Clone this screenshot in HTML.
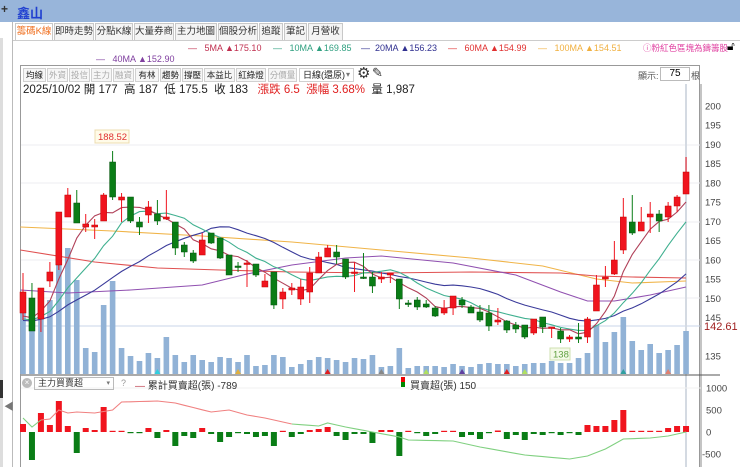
<!DOCTYPE html>
<html><head><meta charset="utf-8">
<style>
*{margin:0;padding:0;box-sizing:border-box}
body{width:740px;height:467px;overflow:hidden;background:#fff;font-family:"Liberation Sans","Noto Sans CJK TC",sans-serif;position:relative}
.abs{position:absolute;white-space:nowrap}
.tab{position:absolute;top:23px;height:18px;border:1px solid #c8c8c8;background:#f4f4f4;font-size:9.5px;line-height:16px;text-align:center;color:#333;white-space:nowrap;overflow:hidden}
.tb{position:absolute;top:68px;height:14px;border:1px solid #d0d0d0;background:#f6f6f6;font-size:8.5px;line-height:12px;text-align:center;color:#222;white-space:nowrap;overflow:hidden}
.tb.g{color:#aaa}
.lg{position:absolute;font-size:9px;white-space:nowrap}
</style></head><body>
<div class="abs" style="left:0;top:0;width:740px;height:22px;background:#98b5da"></div>
<div class="abs" style="left:1px;top:2px;font-size:12px;font-weight:bold;color:#333">+</div>
<div class="abs" style="left:17px;top:3px;font-size:13px;font-weight:bold;color:#1f3fd0">鑫山</div>
<div class="abs" style="left:12px;top:22px;width:1px;height:445px;background:#bbb"></div>
<div class="abs" style="left:0;top:38px;width:3px;height:429px;background:#ddd"></div>
<div class="abs" style="left:0;top:380px;width:3px;height:18px;background:#333"></div>
<div class="abs" style="left:4px;top:398px;font-size:10px;color:#777">◀</div>

<div class="tab" style="left:15px;width:38px;background:#fff;color:#f07020;border-bottom-color:#fff">籌碼K線</div>
<div class="tab" style="left:54px;width:40px">即時走勢</div>
<div class="tab" style="left:95px;width:38px">分點K線</div>
<div class="tab" style="left:134px;width:40px">大量券商</div>
<div class="tab" style="left:175px;width:42px">主力地圖</div>
<div class="tab" style="left:218px;width:40px">個股分析</div>
<div class="tab" style="left:259px;width:24px">追蹤</div>
<div class="tab" style="left:284px;width:23px">筆記</div>
<div class="tab" style="left:308px;width:35px">月營收</div>
<div class="abs" style="left:13px;top:40px;width:727px;height:1px;background:#ccc"></div>

<div class="lg" style="left:188px;top:43px;color:#c03050">—&nbsp;&nbsp;&nbsp;5MA ▲175.10</div>
<div class="lg" style="left:273px;top:43px;color:#30a080">—&nbsp;&nbsp;&nbsp;10MA ▲169.85</div>
<div class="lg" style="left:361px;top:43px;color:#303090">—&nbsp;&nbsp;20MA ▲156.23</div>
<div class="lg" style="left:448px;top:43px;color:#e03030">—&nbsp;&nbsp;&nbsp;60MA ▲154.99</div>
<div class="lg" style="left:538px;top:43px;color:#f0b040">—&nbsp;&nbsp;&nbsp;100MA ▲154.51</div>
<div class="lg" style="left:643px;top:42px;color:#e040a0;font-size:8.5px">ⓘ粉紅色區塊為鑄籌股</div>
<div class="lg" style="left:727px;top:39px;font-size:12px;color:#000">🔓︎</div>
<div class="lg" style="left:96px;top:54px;color:#8040a0">—&nbsp;&nbsp;&nbsp;40MA ▲152.90</div>

<div class="abs" style="left:20px;top:65px;width:680px;height:402px;border:1px solid #999;border-bottom:none"></div>
<div class="tb" style="left:23px;width:23px">均線</div>
<div class="tb g" style="left:47px;width:21px">外資</div>
<div class="tb g" style="left:69px;width:21px">投信</div>
<div class="tb g" style="left:91px;width:21px">主力</div>
<div class="tb g" style="left:113px;width:21px">融資</div>
<div class="tb" style="left:135px;width:24px">有林</div>
<div class="tb" style="left:160px;width:21px">趨勢</div>
<div class="tb" style="left:182px;width:21px">撐壓</div>
<div class="tb" style="left:204px;width:31px">本益比</div>
<div class="tb" style="left:236px;width:30px">紅綠燈</div>
<div class="tb g" style="left:268px;width:29px">分價量</div>
<div class="tb" style="left:299px;width:55px;background:#fff;text-align:left;padding-left:3px;font-size:9px">日線(還原)<span style="position:absolute;right:3px;color:#777;font-size:8px">▾</span></div>
<div class="abs" style="left:357px;top:64px;font-size:15px;color:#333">⚙</div>
<div class="abs" style="left:372px;top:65px;font-size:13px;color:#333">✎</div>
<div class="abs" style="left:638px;top:69px;font-size:9px;color:#555">顯示:</div>
<div class="abs" style="left:660px;top:67px;width:30px;height:14px;border:1px solid #bbb;font-size:10px;text-align:center;line-height:12px">75</div>
<div class="abs" style="left:691px;top:69px;font-size:9px;color:#555">根</div>
<div class="abs" style="left:23px;top:81px;font-size:11.5px;color:#222">2025/10/02 開 177&nbsp; 高 187&nbsp; 低 175.5&nbsp; 收 183&nbsp;&nbsp; <span style="color:#e02020">漲跌 6.5&nbsp; 漲幅 3.68%</span>&nbsp; 量 1,987</div>

<svg id="c" class="abs" style="left:0;top:0" width="740" height="467"></svg>

<div class="abs" style="left:22px;top:378px;width:10px;height:10px;border-radius:50%;background:#bbb;color:#fff;font-size:8px;line-height:10px;text-align:center">×</div>
<div class="abs" style="left:34px;top:377px;width:80px;height:13px;border:1px solid #bbb;font-size:9px;line-height:11px;padding-left:3px;color:#333">主力買賣超<span style="position:absolute;right:3px;font-size:7px;color:#777">▾</span></div>
<div class="abs" style="left:121px;top:378px;font-size:9px;color:#999">?</div>
<div class="abs" style="left:135px;top:377px;font-size:10px;color:#333"><span style="color:#c04050">—</span> 累計買賣超(張) -789</div>
<div class="abs" style="left:401px;top:377px;width:4px;height:10px;background:linear-gradient(#e00 50%,#080 50%)"></div>
<div class="abs" style="left:410px;top:377px;font-size:10px;color:#333">買賣超(張) 150</div>

<script>
var O=[ [0,313,292,273,320],[1,298,331,283,331],[0,319,288,288,332],[0,281,272,262,287],[0,265,212,212,270],[0,217,195,188,217],[1,203,223,190,223],[0,227,224,214,232],[0,227,225,219,239],[0,221,195,193,221],[1,162,197,151,200],[0,200,197,193,222],[1,197,221,197,223],[1,222,227,217,235],[0,215,207,201,223],[1,214,221,200,225],[0,219,217,190,220],[1,222,248,222,255],[1,245,252,242,257],[1,253,261,250,263],[0,255,240,233,255],[1,233,243,233,244],[1,238,258,238,259],[1,255,275,255,275],[1,266,267,262,272],[0,264,263,260,287],[1,264,275,264,277],[0,287,281,274,287],[1,272,305,272,309],[0,299,292,288,309],[0,290,288,283,295],[0,299,287,279,305],[0,292,273,267,303],[0,273,257,252,273],[0,257,248,245,257],[1,252,257,245,264],[1,259,277,259,279],[0,273,272,262,292],[1,277,278,253,279],[1,277,286,272,293],[0,279,277,272,283],[0,275,273,273,283],[1,279,299,279,309],[1,303,304,300,307],[1,300,307,297,310],[1,304,307,300,308],[1,308,316,306,317],[0,313,308,300,315],[0,308,296,296,315],[1,300,305,297,308],[1,307,313,305,313],[1,312,320,305,322],[1,313,326,305,331],[0,322,320,308,325],[1,321,330,320,333],[1,325,329,322,333],[1,325,337,325,339],[0,333,319,319,335],[1,317,327,317,333],[0,328,327,327,338],[1,331,339,328,343],[0,339,337,335,342],[1,337,339,323,343],[0,337,319,317,343],[0,311,285,275,311],[0,279,277,266,287],[0,274,260,241,275],[0,250,217,198,254],[1,222,233,195,235],[0,231,222,207,231],[0,217,214,202,233],[1,214,221,210,232],[0,217,206,202,222],[0,206,197,195,212],[0,194,172,157,194]];
var V=[292,310,290,300,258,248,280,348,352,305,281,348,356,361,353,358,337,355,362,355,360,362,357,358,362,355,366,365,355,357,367,364,360,357,358,360,362,358,359,355,367,366,348,368,366,366,366,367,364,366,367,364,363,364,364,366,364,363,363,361,363,363,358,353,325,342,332,317,341,350,344,353,350,345,331];
var B=[8,-28,19,7,31,6,-21,4,2,25,0.5,1,-1,-1,4,-6,2,-14,-4,-6,4,-2,-10,-5,-0.5,-2,-5,-4,-14,1,-5,-2,2,3,5,-4,-8,-2,-2,-11,2,2,-24,0.5,-1,-4,-2,0,0,-5,-3,-7,-1,1.5,-7,-3,-8,-2,-3,-1,-3,-1,-3,7,6,6,12,22,1,1,1,1,4,6,6];
var L={0:418,1:427,2:420,3:419,4:410,5:413,6:412,8:413,10:410,11:402,15:401,17:403,21:412,23:410,25:415,27:418,30:424,33:426,34:423,36:427,39:432,42:437,43:440,48:441,51:447,56:455,61:459,63:456,65:449,67:439,70:438,72:436,74:432};
function X(i){return 23+i*8.96}
var s='';
[145,183,222,260,298].forEach(function(y){s+='<line x1="21" x2="701" y1="'+y+'" y2="'+y+'" stroke="#ececf2"/>'});
s+='<line x1="21" x2="701" y1="326" y2="326" stroke="#c8d4e8"/>';
s+='<line x1="686" x2="686" y1="84" y2="467" stroke="#d4dae2" stroke-width="2"/>';
s+='<line x1="701" x2="701" y1="84" y2="467" stroke="#888"/>';
s+='<line x1="21" x2="720" y1="375" y2="375" stroke="#555"/>';
s+='<line x1="21" x2="701" y1="388" y2="388" stroke="#f0f0f0"/>';
for(var p=200;p>=135;p-=5){var y=125+(195-p)*3.85;if(p==140)continue;s+='<text x="705" y="'+(y+3.5)+'" font-size="9.5" fill="#444">'+p+'</text>'}
s+='<text x="704" y="330" font-size="11" fill="#a02020">142.61</text>';
[[1000,388],[500,410],[0,432],[-500,454]].forEach(function(a){s+='<text x="'+(a[0]<0?702:706)+'" y="'+(a[1]+3.5)+'" font-size="9.5" fill="#444">'+a[0]+'</text>'});
V.forEach(function(v,i){s+='<rect x="'+(X(i)-2.8)+'" y="'+v+'" width="5.6" height="'+(374-v)+'" fill="#91b2d6"/>'});
[[15,'#30d0e0'],[24,'#e0b040'],[45,'#b0e060'],[54,'#e02020'],[34,'#e02020'],[40,'#888'],[49,'#6040a0'],[56,'#b0e060'],[67,'#30a0a0'],[72,'#e08070']].forEach(function(m){var x=X(m[0]);s+='<polygon points="'+(x-3)+',374 '+(x+3)+',374 '+x+',369" fill="'+m[1]+'"/>'});
var C=[];for(var k=0;k<20;k++)C.push(322);O.forEach(function(o){C.push(o[2])});
function ma(n){var pts=[];for(var i=0;i<75;i++){var t=0;for(var j=0;j<n;j++)t+=C[i+20-j];pts.push(X(i).toFixed(1)+','+(t/n).toFixed(1))}return pts.join(' ')}
function pl(pts,c){return '<polyline points="'+pts+'" fill="none" stroke="'+c+'" stroke-width="1.1"/>'}
function kp(arr){return arr.map(function(a){return X(a[0]).toFixed(1)+','+a[1]}).join(' ')}
s+=pl(kp([[-0.3,227],[10,231],[20,236],[30,242],[40,250],[50,258],[58,266],[64,279],[68,283],[74,281]]),'#f0b448');
s+=pl(kp([[-0.3,250],[8,262],[15,268],[22,270],[30,272],[40,273],[50,272],[60,273],[64,276],[68,277],[74,278]]),'#e05050');
s+=pl(kp([[-0.3,290],[5,293],[12,290],[20,285],[25,274],[30,265],[36,258],[40,256],[48,263],[55,275],[60,292],[63,301],[66,301],[70,295],[74,287]]),'#9050b0');
s+=pl(ma(20),'#3a3a9a');s+=pl(ma(10),'#40b090');s+=pl(ma(5),'#b04058');
O.forEach(function(o,i){var x=X(i),g=o[0],c=g?'#0a7d16':'#f0141e',bc=g?'#05500d':'#c00000';var t=Math.min(o[1],o[2]),h=Math.max(1.5,Math.abs(o[1]-o[2]));
s+='<line x1="'+x+'" x2="'+x+'" y1="'+o[3]+'" y2="'+o[4]+'" stroke="'+c+'"/>';
s+='<rect x="'+(x-3)+'" y="'+t+'" width="6" height="'+h+'" fill="'+c+'" stroke="'+bc+'" stroke-width="0.5"/>';});
s+='<rect x="95" y="130" width="34" height="13" fill="#fffbe8" stroke="#ecdcb0"/><text x="98" y="140" font-size="9.5" fill="#e03030">188.52</text>';
s+='<rect x="550" y="348" width="20" height="12" fill="#f4fae8" stroke="#cfe0b0"/><text x="553" y="357.5" font-size="9.5" fill="#60a040">138</text>';
B.forEach(function(b,i){var x=X(i),c=b>=0?'#f0141e':'#0a7d16';var h=Math.max(1.2,Math.abs(b));s+='<rect x="'+(x-3)+'" y="'+(b>=0?432-h:432)+'" width="6" height="'+h+'" fill="'+c+'"/>'});
var ks=Object.keys(L).map(Number),ly=[];for(var i=0;i<75;i++){for(var a=0;a<ks.length-1;a++){if(i>=ks[a]&&i<=ks[a+1]){var f=(i-ks[a])/(ks[a+1]-ks[a]);ly[i]=L[ks[a]]+f*(L[ks[a+1]]-L[ks[a]]);break}}}
function seg(a,b,c){var p=[];for(var i=a;i<=b;i++)p.push(X(i).toFixed(1)+','+ly[i].toFixed(1));return pl(p.join(' '),c)}
s+=seg(0,2,'#80d080');s+=seg(2,30,'#f08080');s+=seg(30,74,'#80d080');
document.getElementById('c').innerHTML=s;
</script>
</body></html>
